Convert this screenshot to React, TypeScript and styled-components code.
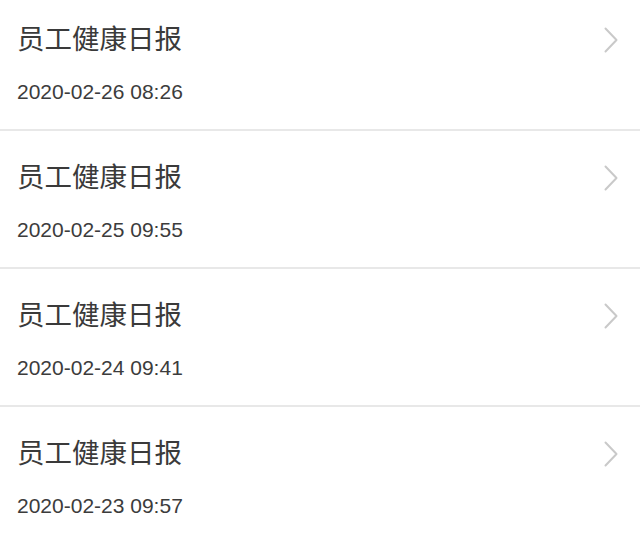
import React from "react";
import styled, { createGlobalStyle } from "styled-components";

const GlobalStyle = createGlobalStyle`
  html, body {
    margin: 0;
    padding: 0;
    background: #ffffff;
  }
  body {
    font-family: "Liberation Sans", "Noto Sans CJK SC", sans-serif;
    overflow: hidden;
  }
`;

const List = styled.ul`
  list-style: none;
  margin: -7px 0 0;
  padding: 0;
`;

const Row = styled.li`
  display: flex;
  flex-direction: column;
  box-sizing: border-box;
  height: 138px;
  padding: 29px 22px 0 17px;
  border-bottom: 2px solid #e8e8e8;
`;

const Header = styled.div`
  display: flex;
  align-items: center;
  justify-content: space-between;
  height: 36px;
`;

const Title = styled.span`
  font-family: "Liberation Sans", "Noto Sans CJK SC", sans-serif;
  font-size: 27.5px;
  line-height: 36px;
  color: #3a3a3a;
`;

const Stamp = styled.div`
  margin-top: 22px;
  font-family: "Liberation Sans", "Noto Sans CJK SC", sans-serif;
  font-size: 21px;
  line-height: 24px;
  color: #3c3c3c;
`;

const Chevron = () => (
  <svg width="14" height="26" viewBox="0 0 14 26" fill="none">
    <polyline
      points="1.5,1.5 12.5,13 1.5,24.5"
      stroke="#c9c9c9"
      strokeWidth="2"
      strokeLinecap="round"
      strokeLinejoin="round"
    />
  </svg>
);

const reports = [
  "2020-02-26 08:26",
  "2020-02-25 09:55",
  "2020-02-24 09:41",
  "2020-02-23 09:57",
];

export default function App() {
  return (
    <>
      <GlobalStyle />
      <List>
        {reports.map((time) => (
          <Row key={time}>
            <Header>
              <Title>员工健康日报</Title>
              <Chevron />
            </Header>
            <Stamp>{time}</Stamp>
          </Row>
        ))}
      </List>
    </>
  );
}
